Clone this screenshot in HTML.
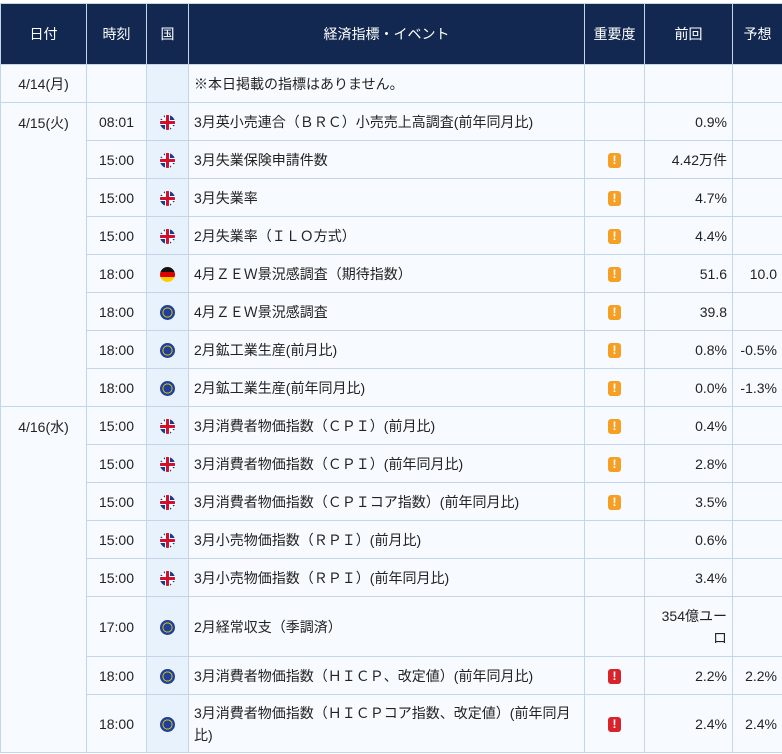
<!DOCTYPE html>
<html><head><meta charset="utf-8"><style>
body{margin:0;background:#fff;font-family:"Liberation Sans","Noto Sans CJK JP",sans-serif;font-size:14px;color:#222;}
table{position:absolute;left:0;top:3px;border-collapse:collapse;table-layout:fixed;width:782px;background:#f7fbff;}
th{background:#122850;color:#fff;font-weight:normal;height:60px;border:1px solid #c5d5e8;font-size:14px;padding:0}
td{border:1px solid #c5d5e8;height:37px;padding:0 5px;}
td.c{text-align:center}
td.f{background:#e8f2fd;text-align:center;padding:0}
td.r{text-align:right}
.fl{display:inline-block;width:15px;height:15px;border-radius:50%;vertical-align:middle;overflow:hidden}
.uk{background:linear-gradient(#d0102e,#d0102e) center/100% 3px no-repeat,linear-gradient(#d0102e,#d0102e) center/3px 100% no-repeat,linear-gradient(#fff,#fff) center/100% 5px no-repeat,linear-gradient(#fff,#fff) center/5px 100% no-repeat,linear-gradient(45deg,#1b3a8c 42%,#fff 42% 58%,#1b3a8c 58%),#1b3a8c;}
.de{background:linear-gradient(#111 0 33%,#d00 33% 66%,#fc0 66%)}
.eu{background:radial-gradient(circle,#1d3f9e 0 38%,#e8c400 40% 46%,#1d3f9e 49%)}
.im{display:inline-block;width:13px;height:15px;border-radius:3px;color:#fff;font-weight:bold;font-size:12px;line-height:15px;vertical-align:middle}
.o{background:#f5a025}.rd{background:#d8232a}
</style></head><body>
<table>
<colgroup><col style="width:86px"><col style="width:60px"><col style="width:42px"><col style="width:396px"><col style="width:60px"><col style="width:88px"><col style="width:50px"></colgroup>
<tr><th>日付</th><th>時刻</th><th>国</th><th>経済指標・イベント</th><th>重要度</th><th>前回</th><th>予想</th></tr>
<tr><td class="c">4/14(月)</td><td></td><td class="f"></td><td>※本日掲載の指標はありません。</td><td></td><td></td><td></td></tr>
<tr><td class="c" rowspan="8" style="vertical-align:top;padding-top:10px">4/15(火)</td><td class="c">08:01</td><td class="f"><span class="fl uk"></span></td><td>3月英小売連合（ＢＲＣ）小売売上高調査(前年同月比)</td><td></td><td class="r">0.9%</td><td></td></tr>
<tr><td class="c">15:00</td><td class="f"><span class="fl uk"></span></td><td>3月失業保険申請件数</td><td class="c"><span class="im o">!</span></td><td class="r">4.42万件</td><td></td></tr>
<tr><td class="c">15:00</td><td class="f"><span class="fl uk"></span></td><td>3月失業率</td><td class="c"><span class="im o">!</span></td><td class="r">4.7%</td><td></td></tr>
<tr><td class="c">15:00</td><td class="f"><span class="fl uk"></span></td><td>2月失業率（ＩＬＯ方式）</td><td class="c"><span class="im o">!</span></td><td class="r">4.4%</td><td></td></tr>
<tr><td class="c">18:00</td><td class="f"><span class="fl de"></span></td><td>4月ＺＥＷ景況感調査（期待指数）</td><td class="c"><span class="im o">!</span></td><td class="r">51.6</td><td class="r">10.0</td></tr>
<tr><td class="c">18:00</td><td class="f"><span class="fl eu"></span></td><td>4月ＺＥＷ景況感調査</td><td class="c"><span class="im o">!</span></td><td class="r">39.8</td><td></td></tr>
<tr><td class="c">18:00</td><td class="f"><span class="fl eu"></span></td><td>2月鉱工業生産(前月比)</td><td class="c"><span class="im o">!</span></td><td class="r">0.8%</td><td class="r">-0.5%</td></tr>
<tr><td class="c">18:00</td><td class="f"><span class="fl eu"></span></td><td>2月鉱工業生産(前年同月比)</td><td class="c"><span class="im o">!</span></td><td class="r">0.0%</td><td class="r">-1.3%</td></tr>
<tr><td class="c" rowspan="8" style="vertical-align:top;padding-top:10px">4/16(水)</td><td class="c">15:00</td><td class="f"><span class="fl uk"></span></td><td>3月消費者物価指数（ＣＰＩ）(前月比)</td><td class="c"><span class="im o">!</span></td><td class="r">0.4%</td><td></td></tr>
<tr><td class="c">15:00</td><td class="f"><span class="fl uk"></span></td><td>3月消費者物価指数（ＣＰＩ）(前年同月比)</td><td class="c"><span class="im o">!</span></td><td class="r">2.8%</td><td></td></tr>
<tr><td class="c">15:00</td><td class="f"><span class="fl uk"></span></td><td>3月消費者物価指数（ＣＰＩコア指数）(前年同月比)</td><td class="c"><span class="im o">!</span></td><td class="r">3.5%</td><td></td></tr>
<tr><td class="c">15:00</td><td class="f"><span class="fl uk"></span></td><td>3月小売物価指数（ＲＰＩ）(前月比)</td><td></td><td class="r">0.6%</td><td></td></tr>
<tr><td class="c">15:00</td><td class="f"><span class="fl uk"></span></td><td>3月小売物価指数（ＲＰＩ）(前年同月比)</td><td></td><td class="r">3.4%</td><td></td></tr>
<tr><td class="c" style="height:59px">17:00</td><td class="f"><span class="fl eu"></span></td><td>2月経常収支（季調済）</td><td></td><td class="r" style="line-height:22px">354億ユー<br>ロ</td><td></td></tr>
<tr><td class="c">18:00</td><td class="f"><span class="fl eu"></span></td><td>3月消費者物価指数（ＨＩＣＰ、改定値）(前年同月比)</td><td class="c"><span class="im rd">!</span></td><td class="r">2.2%</td><td class="r">2.2%</td></tr>
<tr><td class="c" style="height:57px">18:00</td><td class="f"><span class="fl eu"></span></td><td style="line-height:22px">3月消費者物価指数（ＨＩＣＰコア指数、改定値）(前年同月<br>比)</td><td class="c"><span class="im rd">!</span></td><td class="r">2.4%</td><td class="r">2.4%</td></tr>
</table>
</body></html>
